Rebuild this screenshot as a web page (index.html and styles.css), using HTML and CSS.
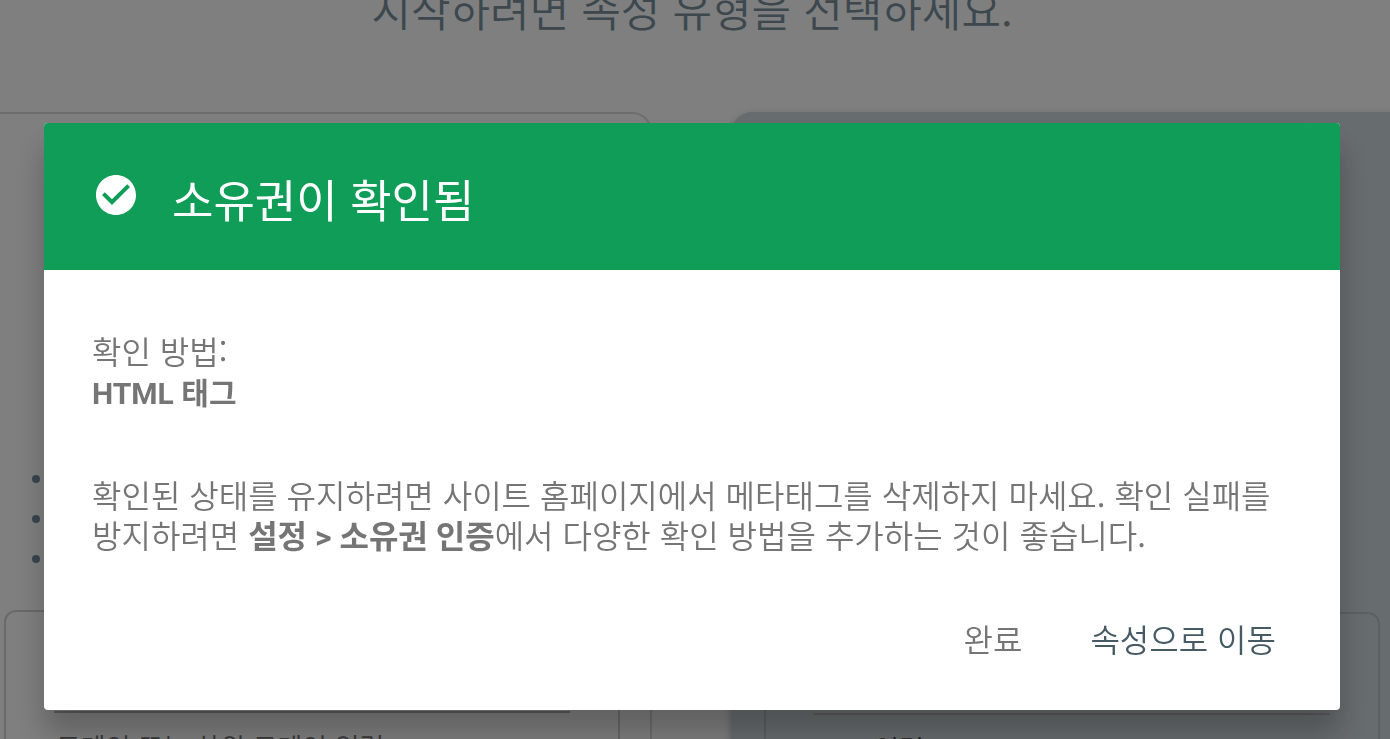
FILE: index.html
```html
<!DOCTYPE html>
<html lang="ko">
<head>
    <meta charset="UTF-8">
    <meta name="viewport" content="width=device-width, initial-scale=1.0">
    <title>소유권이 확인됨</title>
    <link rel="stylesheet" href="styles.css">
</head>
<body>
    <main class="page">
        <h1 class="page-title">시작하려면 속성 유형을 선택하세요.</h1>
        <div class="cards">
            <section class="card">
                <ul class="features">
                    <li></li>
                    <li></li>
                    <li></li>
                </ul>
                <div class="field">
                    <input class="field-input" type="text" id="domain">
                    <label class="field-label" for="domain">도메인 또는 하위 도메인 입력</label>
                </div>
            </section>
            <section class="card card-active">
                <ul class="features">
                    <li></li>
                    <li></li>
                    <li></li>
                </ul>
                <div class="field">
                    <input class="field-input" type="text" id="url">
                    <label class="field-label" for="url">URL 입력</label>
                </div>
            </section>
        </div>
    </main>

    <div class="overlay">
        <div class="dialog" role="dialog" aria-labelledby="dialog-title">
            <header class="dialog-header">
                <svg class="dialog-icon" viewBox="0 0 24 24" aria-hidden="true">
                    <path fill="currentColor" d="M12 2C6.48 2 2 6.48 2 12s4.48 10 10 10 10-4.48 10-10S17.52 2 12 2zm-2 15l-5-5 1.41-1.41L10 14.17l7.59-7.59L19 8l-9 9z"/>
                </svg>
                <h2 class="dialog-title" id="dialog-title">소유권이 확인됨</h2>
            </header>
            <div class="dialog-body">
                <p>확인 방법:<br><strong class="method">HTML 태그</strong></p>
                <p>확인된 상태를 유지하려면 사이트 홈페이지에서 메타태그를 삭제하지 마세요. 확인 실패를 방지하려면 <strong>설정 &gt; 소유권 인증</strong>에서 다양한 확인 방법을 추가하는 것이 좋습니다.</p>
            </div>
            <footer class="dialog-actions">
                <button class="btn" type="button">완료</button>
                <button class="btn btn-primary" type="button">속성으로 이동</button>
            </footer>
        </div>
    </div>
</body>
</html>
```
FILE: styles.css
```css
* {
    box-sizing: border-box;
}
body {
    margin: 0;
    background-color: #fff;
    font-family: "Noto Sans CJK KR", sans-serif;
    font-weight: 350;
}
.page {
    height: 100vh;
    padding-right: 6px;
    overflow: hidden;
}
.page-title {
    margin: -20px 0 76px;
    font-size: 43px;
    font-weight: 350;
    line-height: 56px;
    text-align: center;
    color: #78909c;
}
.cards {
    display: grid;
    grid-template-columns: 1fr 1fr;
    gap: 80px;
    margin: 0 -28px;
}
.card {
    display: flex;
    flex-direction: column;
    gap: 31px;
    padding: 0 30px 32px;
    border: 2px solid #dadce0;
    border-radius: 20px;
}
.card-active {
    gap: 33px;
    border-color: #cfd8dc;
    background-color: #cfd8dc;
    box-shadow: 0 4px 10px rgba(0, 0, 0, 0.3);
}
.features {
    display: flex;
    flex-direction: column;
    justify-content: flex-end;
    height: 465px;
    margin: 0;
    padding: 0 28px;
    list-style: none;
}
.features li {
    display: flex;
    align-items: center;
    height: 40px;
}
.features li::before {
    content: "";
    width: 8px;
    height: 8px;
    border-radius: 50%;
    background-color: #6f8c9a;
}
.field {
    padding: 23px 48px;
    border: 2px solid #d2d2d2;
    border-radius: 12px;
}
.card-active .field {
    border-color: #b8c0c4;
}
.field-input {
    display: block;
    width: 100%;
    height: 78px;
    padding: 0;
    border: none;
    border-bottom: 2px solid #b8b8b8;
    background: none;
    font: inherit;
}
.field-label {
    display: block;
    margin-top: 14px;
    padding: 0 2px;
    font-size: 27px;
    line-height: 40px;
    color: #757575;
}
.card-active .field-label {
    color: #444;
}
.overlay {
    position: fixed;
    inset: 0;
    padding: 123px 50px 0 44px;
    background-color: rgba(0, 0, 0, 0.5);
}
.dialog {
    border-radius: 4px;
    background-color: #fff;
    box-shadow: 0 24px 30px rgba(0, 0, 0, 0.24);
    overflow: hidden;
}
.dialog-header {
    display: flex;
    gap: 32px;
    padding: 48px 48px 43px;
    background-color: #0f9d58;
    color: #fff;
}
.dialog-icon {
    flex: none;
    width: 48px;
    height: 48px;
}
.dialog-title {
    margin: 0;
    font-size: 45px;
    font-weight: 400;
    line-height: 56px;
}
.dialog-body {
    padding: 60px 48px 48px;
    font-size: 32px;
    line-height: 40px;
    color: #757575;
}
.dialog-body p {
    margin: 0;
}
.dialog-body p + p {
    margin-top: 64px;
}
.dialog-body strong {
    font-family: Roboto, "Noto Sans CJK KR", sans-serif;
    font-weight: 700;
    line-height: 1;
}
.dialog-body .method {
    font-size: 30px;
}
.dialog-actions {
    display: flex;
    justify-content: flex-end;
    gap: 36px;
    padding: 0 48px 36px;
}
.btn {
    height: 72px;
    padding: 0 16px;
    border: none;
    background: none;
    font: inherit;
    font-size: 32px;
    color: #757575;
    cursor: pointer;
}
.btn-primary {
    color: #455a64;
}
```
